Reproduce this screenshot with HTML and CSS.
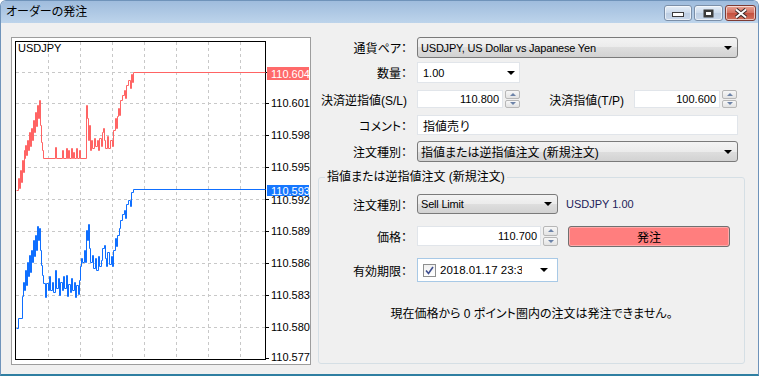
FILE: index.html
```html
<!DOCTYPE html>
<html lang="ja">
<head>
    <meta charset="UTF-8">
    <meta name="viewport" content="width=device-width, initial-scale=1.0">
    <title>オーダーの発注</title>
    <link rel="stylesheet" href="styles.css">
</head>
<body>
<div class="window">
    <div class="titlebar">
        <span class="title">オーダーの発注</span>
        <div class="caption-buttons">
            <span class="cap-btn min">
                <svg width="12" height="5" viewBox="0 0 12 5"><rect x="0.5" y="0.5" width="11" height="4" fill="#fff" stroke="#3b3b3b"/></svg>
            </span>
            <span class="cap-btn max">
                <svg width="11" height="9" viewBox="0 0 11 9"><rect x="0.5" y="0.5" width="10" height="8" fill="#3b3b3b"/><rect x="2.5" y="2.5" width="6" height="4" fill="#fff" stroke="#3b3b3b"/></svg>
            </span>
            <span class="cap-btn close">
                <svg width="14" height="11" viewBox="0 0 14 11">
                    <path d="M2 1.5 L12 9.5 M12 1.5 L2 9.5" stroke="#3b2a2a" stroke-width="4"/>
                    <path d="M2 1.5 L12 9.5 M12 1.5 L2 9.5" stroke="#fff" stroke-width="2"/>
                </svg>
            </span>
        </div>
    </div>

    <div class="client">
        <div class="chart-frame">
            <svg class="chart" width="298" height="326" viewBox="12 38 298 326">
                <rect x="12" y="38" width="298" height="326" fill="#fff"/>
                <!-- сетка -->
                <g stroke="#c8c8c8" stroke-dasharray="3 3" fill="none">
                    <path d="M48.5 42V359 M80.5 42V359 M112.5 42V359 M144.5 42V359 M176.5 42V359 M208.5 42V359 M240.5 42V359"/>
                    <path d="M16 72.5H265 M16 103.5H265 M16 135.5H265 M16 167.5H265 M16 199.5H265 M16 231.5H265 M16 263.5H265 M16 295.5H265 M16 327.5H265"/>
                </g>
                <rect x="15.5" y="41.5" width="250" height="318" fill="none" stroke="#000"/>
                <path stroke="#000" d="M266 72.5h3 M266 103.5h3 M266 135.5h3 M266 167.5h3 M266 199.5h3 M266 231.5h3 M266 263.5h3 M266 295.5h3 M266 327.5h3 M266 358.5h3"/>

                <text class="symbol" x="18" y="52">USDJPY</text>

                <g fill="none" stroke-width="1" transform="translate(0.5 0.5)">
                    <!-- ask -->
                    <path stroke="#ff6464" d="M16 190 H18 V178 H19 V188 H20 V170 H21 V182 H22 V160 H23 V172 H24 V150 H25 V158 V145 H26 V155 H27 V140 H28 V150 H29 V132 H30 V146 H31 V128 H32 V140 H33 V120 H34 V132 H35 V112 H36 V126 H37 V105 H38 V118 H39 V100 H40 V125 H41 V142 H42 V150 H43 V158 H55 V147 H56 V158 H62 V150 H63 V158 H66 V148 H67 V158 H68 V150 H69 V158 H71 V148 H72 V158 H73 V152 H74 V158 H76 V148 H77 V158 H79 V150 H80 V158 H86 V105 H87 V118 H88 V140 H89 V125 H90 V150 H91 V140 H92 V148 H94 V138 H95 V146 H97 V140 H98 V150 H99 V138 H101 V146 H102 V132 H103 V128 H104 V140 H105 V148 H107 V136 H108 V148 H110 V140 H112 V146 H113 V130 H115 V118 H116 V128 H117 V116 H118 V108 H119 V115 H120 V100 H122 V95 H124 V90 H125 V98 H126 V85 H128 V80 H130 V88 H131 V74 H132 V82 H133 V72 H265"/>
                    <!-- bid -->
                    <path stroke="#0f6fff" d="M16 328 H18 V318 H22 V296 H23 V282 H24 V290 H25 V270 H26 V285 H27 V262 H28 V276 H29 V255 H30 V272 H31 V250 H32 V262 H33 V240 H34 V256 H35 V235 H36 V250 H37 V226 H38 V240 H39 V228 H40 V250 H41 V265 H42 V275 H43 V283 H45 V297 H46 V283 H48 V290 H49 V276 H50 V290 H52 V282 H53 V292 H55 V270 H56 V288 H58 V278 H59 V295 H60 V282 H62 V290 H63 V276 H64 V288 H66 V275 H67 V296 H68 V284 H70 V292 H71 V278 H72 V290 H74 V282 H75 V297 H76 V285 H78 V294 H79 V280 H80 V266 H81 V258 H82 V262 H84 V250 H85 V262 H86 V230 H87 V240 H88 V224 H89 V248 H90 V262 H92 V255 H93 V268 H95 V258 H96 V270 H98 V256 H99 V266 H101 V260 H102 V248 H104 V245 H105 V258 H106 V266 H107 V252 H109 V264 H111 V256 H112 V266 H113 V250 H115 V238 H116 V246 H117 V235 H119 V228 H120 V220 H122 V214 H124 V210 H125 V218 H126 V204 H128 V200 H130 V206 H131 V192 H133 V189 H265"/>
                </g>

                <g class="axis">
                    <text x="271" y="107">110.601</text>
                    <text x="271" y="139">110.598</text>
                    <text x="271" y="171">110.595</text>
                    <text x="271" y="203.5">110.592</text>
                    <text x="271" y="235">110.589</text>
                    <text x="271" y="267">110.586</text>
                    <text x="271" y="299">110.583</text>
                    <text x="271" y="331">110.580</text>
                    <text x="271" y="361">110.577</text>
                </g>
                <rect x="267" y="67" width="42" height="13" fill="#ff6a6a"/>
                <text class="axis price" x="271" y="78">110.604</text>
                <rect x="267" y="185" width="42" height="11" fill="#1677ff"/>
                <text class="axis price" x="271" y="194.5">110.593</text>
            </svg>
        </div>

        <div class="order-form">
            <div class="row h21">
                <label class="label">通貨ペア：</label>
                <div class="combo w-full"><span class="value latin">USDJPY, US Dollar vs Japanese Yen</span><i class="arrow"></i></div>
            </div>
            <div class="row h21 gap4">
                <label class="label">数量：</label>
                <div class="edit-combo w-short"><span class="value">1.00</span><i class="arrow"></i></div>
            </div>
            <div class="row h18 gap7">
                <label class="label">決済逆指値(S/L)</label>
                <div class="spin w-short">
                    <span class="spin-input">110.800</span>
                    <span class="spin-buttons"><i class="up"></i><i class="down"></i></span>
                </div>
                <label class="label label-tp">決済指値(T/P)</label>
                <div class="spin w-short">
                    <span class="spin-input">100.600</span>
                    <span class="spin-buttons"><i class="up"></i><i class="down"></i></span>
                </div>
            </div>
            <div class="row h20 gap7">
                <label class="label">コメント：</label>
                <div class="textbox w-full">指値売り</div>
            </div>
            <div class="row h21 gap6">
                <label class="label">注文種別：</label>
                <div class="combo w-full"><span class="value">指値または逆指値注文 (新規注文)</span><i class="arrow"></i></div>
            </div>

            <fieldset class="group">
                <legend>指値または逆指値注文 (新規注文)</legend>
                <div class="row h20">
                    <label class="label">注文種別：</label>
                    <div class="combo w-mid"><span class="value latin">Sell Limit</span><i class="arrow"></i></div>
                    <span class="lot-info">USDJPY 1.00</span>
                </div>
                <div class="row h20 gap12">
                    <label class="label">価格：</label>
                    <div class="spin w-mid">
                        <span class="spin-input">110.700</span>
                        <span class="spin-buttons"><i class="up"></i><i class="down"></i></span>
                    </div>
                    <button class="send-btn">発注</button>
                </div>
                <div class="row h24 gap12">
                    <label class="label">有効期限：</label>
                    <div class="datepicker w-mid">
                        <span class="checkbox">
                            <svg width="9" height="9" viewBox="0 0 9 9"><path d="M1 4.5 L3.5 7.5 L8 1" fill="none" stroke="#3f4f8f" stroke-width="1.6"/></svg>
                        </span>
                        <span class="date-text">2018.01.17 23:33</span>
                        <i class="arrow"></i>
                    </div>
                </div>
                <p class="notice">現在価格から 0 ポイント圏内の注文は発注できません。</p>
            </fieldset>
        </div>
    </div>
</div>
</body>
</html>
```

FILE: styles.css
```css
body {
    margin: 0;
    font-family: "Liberation Sans", "Noto Sans CJK JP", sans-serif;
    font-size: 12px;
    color: #000;
}
.window {
    width: 759px;
    height: 376px;
    box-sizing: border-box;
    border: 1px solid #6f93ba;
    border-bottom: 2px solid #2f7fa2;
    border-radius: 6px 6px 0 0;
    background: #f0f0f0;
    display: flex;
    flex-direction: column;
    overflow: hidden;
}
.titlebar {
    height: 22px;
    flex: none;
    display: flex;
    align-items: flex-start;
    background: linear-gradient(#9fbcdd, #bdd4eb);
}
.title {
    font-size: 12px;
    line-height: 22px;
    padding-left: 5px;
    font-feature-settings: "palt";
}
.caption-buttons {
    display: flex;
    gap: 2px;
    margin-left: auto;
    margin-right: 2px;
    margin-top: 4px;
}
.cap-btn {
    height: 16px;
    box-sizing: border-box;
    border: 1px solid #7b8fa8;
    border-radius: 3px;
    background: linear-gradient(#e6eef8, #cbdaeb 50%, #bccde2 50%, #c9d8ea);
    display: flex;
    align-items: center;
    justify-content: center;
    box-shadow: inset 0 0 0 1px rgba(255, 255, 255, .6);
}
.cap-btn.min {
    width: 28px;
    align-items: flex-end;
    padding-bottom: 3px;
}
.cap-btn.max {
    width: 29px;
}
.cap-btn.close {
    width: 31px;
    border-color: #7d3b34;
    background: linear-gradient(#e8a394, #d36f5f 50%, #c44f3d 50%, #d2725f);
}

.client {
    flex: 1;
    display: flex;
    padding: 14px 0 0 10px;
}
.chart-frame {
    width: 300px;
    height: 328px;
    box-sizing: border-box;
    border: 1px solid #9d9d9d;
    flex: none;
}
.chart {
    display: block;
}
.chart .axis,
.chart .symbol {
    font: 11px "Liberation Sans", sans-serif;
    fill: #000;
}
.chart .price {
    fill: #fff;
}

.order-form {
    width: 427px;
    margin-left: 7px;
    display: flex;
    flex-direction: column;
}
.row {
    display: flex;
    align-items: center;
    flex: none;
}
.h18 { height: 18px; }
.h20 { height: 20px; }
.h21 { height: 21px; }
.h24 { height: 24px; }
.gap4 { margin-top: 4px; }
.gap6 { margin-top: 6px; }
.gap7 { margin-top: 7px; }
.gap12 { margin-top: 12px; }

.label {
    width: 89px;
    flex: none;
    margin-right: 10px;
    text-align: right;
    white-space: nowrap;
    font-feature-settings: "palt";
}
.label-tp {
    width: 104px;
    margin-right: 10px;
}
.w-full { width: 321px; }
.w-short { width: 103px; }
.w-mid { width: 141px; }

.combo,
.edit-combo,
.textbox,
.datepicker {
    height: 100%;
    box-sizing: border-box;
    display: flex;
    align-items: center;
    font-size: 11px;
}
.combo {
    border: 1px solid #7a7a7a;
    border-radius: 3px;
    background: linear-gradient(#f3f3f3, #ebebeb 50%, #dedede 50%, #d2d2d2);
    padding-left: 3px;
    font-feature-settings: "palt";
}
.combo .value,
.edit-combo .value {
    flex: 1;
    white-space: nowrap;
    overflow: hidden;
}
.combo .value {
    font-size: 12px;
}
.combo .latin {
    font-size: 11px;
    letter-spacing: -0.2px;
}
.edit-combo {
    background: #fff;
    border: 1px solid #e1e5ea;
    padding-left: 5px;
}
.arrow {
    width: 0;
    height: 0;
    flex: none;
    border-left: 4px solid transparent;
    border-right: 4px solid transparent;
    border-top: 4px solid #000;
    margin-right: 5px;
}
.edit-combo .arrow {
    margin-right: 4px;
}
.textbox {
    background: #fff;
    border: 1px solid #e1e5ea;
    padding-left: 5px;
    font-size: 12px;
}

.spin {
    height: 100%;
    display: flex;
    flex: none;
}
.spin-input {
    flex: 1;
    background: #fff;
    border: 1px solid #e1e5ea;
    padding-right: 3px;
    font-size: 11px;
    display: flex;
    align-items: center;
    justify-content: flex-end;
}
.spin-buttons {
    width: 15px;
    margin-left: 2px;
    display: flex;
    flex-direction: column;
    gap: 1px;
}
.spin-buttons i {
    flex: 1;
    border: 1px solid #b7b7b7;
    border-radius: 2px;
    background: linear-gradient(#f7f7f7, #e3e3e3);
    display: flex;
    align-items: center;
    justify-content: center;
}
.spin-buttons i::after {
    content: "";
    border-left: 3px solid transparent;
    border-right: 3px solid transparent;
}
.spin-buttons .up::after {
    border-bottom: 3px solid #6d83a8;
}
.spin-buttons .down::after {
    border-top: 3px solid #6d83a8;
}

.group {
    margin: 7px 0 0;
    height: 195px;
    box-sizing: border-box;
    border: 1px solid #d5dfe5;
    border-radius: 3px;
    padding: 9px 6px 0 6px;
}
.group legend {
    padding: 0 2px;
    line-height: 16px;
    font-feature-settings: "palt";
}
.group .label {
    width: 82px;
}
.lot-info {
    margin-left: 8px;
    font-size: 11px;
    color: #22225a;
}
.send-btn {
    margin-left: 10px;
    width: 162px;
    height: 21px;
    border: 1px solid #707070;
    border-radius: 3px;
    background: #ff7e7e;
    box-shadow: inset 0 0 0 1px #ffa8a8;
    font: 12px "Liberation Sans", "Noto Sans CJK JP", sans-serif;
    color: #000;
    padding: 0;
}
.datepicker {
    background: #fff;
    border: 1px solid #a8c9e6;
    padding-left: 5px;
}
.checkbox {
    width: 13px;
    height: 13px;
    box-sizing: border-box;
    border: 1px solid #8e8f8f;
    background: linear-gradient(#f0f0f0, #fff);
    display: flex;
    align-items: center;
    justify-content: center;
    flex: none;
}
.date-text {
    width: 82px;
    margin-left: 4px;
    font-size: 11.5px;
    white-space: nowrap;
    overflow: hidden;
    flex: none;
}
.datepicker .arrow {
    margin-left: auto;
    margin-right: 9px;
}
.notice {
    margin: 25px 0 0;
    text-align: center;
    line-height: 14px;
    font-feature-settings: "palt";
}
```
